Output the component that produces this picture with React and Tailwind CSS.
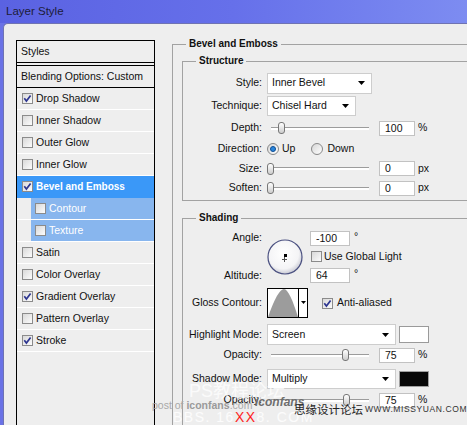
import React from "react";

const Check = ({ checked }) => (
  <span className="flex h-[11px] w-[11px] shrink-0 items-center justify-center border border-[#8b8b8b] bg-linear-to-br from-[#d9d9d9] to-[#fcfcfc]">
    {checked && (
      <svg width="9" height="9" viewBox="0 0 9 9">
        <path d="M1.3 4.3 L3.4 7 L7.6 1.4" fill="none" stroke="#2d3590" strokeWidth="1.7" />
      </svg>
    )}
  </span>
);

const Arrow = () => (
  <svg width="7" height="4" viewBox="0 0 7 4">
    <polygon points="0,0 7,0 3.5,4" fill="#000" />
  </svg>
);

const Select = ({ value, className }) => (
  <div className={"flex items-center justify-between border border-[#cdcdcd] bg-white pl-[4px] pr-[6px] " + className}>
    <span>{value}</span>
    <Arrow />
  </div>
);

const Input = ({ children, className }) => (
  <div className={"flex h-[15px] items-center border border-[#c2c2c2] bg-white pl-[5px] leading-none " + className}>
    {children}
  </div>
);

const Slider = ({ pos }) => (
  <div className="relative ml-[4px] flex h-[14px] w-[98px] items-center">
    <div className="h-[3px] w-full border-t border-[#9c9c9c] bg-white" />
    <div
      className="absolute top-[1px] h-[12px] w-[7px] rounded-[3px] border border-[#777] bg-linear-to-b from-white to-[#cdcdcd]"
      style={{ left: pos }}
    />
  </div>
);

const Radio = ({ on }) => (
  <span className="flex h-[12px] w-[12px] shrink-0 items-center justify-center rounded-full border border-[#888] bg-linear-to-br from-[#d6d6d6] to-white">
    {on && <span className="h-[6px] w-[6px] rounded-full border border-[#0d4d93] bg-[#2a86dc]" />}
  </span>
);

const Label = ({ children }) => (
  <span className="w-[79px] shrink-0 text-right">{children}</span>
);

const Group = ({ title, className, children }) => (
  <div className={"relative border-l border-t border-[#a2a2a2] " + className}>
    <span className="absolute left-[13px] top-[-7px] bg-[#eeeeee] px-[3px] text-[10px] font-bold leading-[12px]">
      {title}
    </span>
    {children}
  </div>
);

const rows = [
  { label: "Drop Shadow", checked: true },
  { label: "Inner Shadow" },
  { label: "Outer Glow" },
  { label: "Inner Glow" },
  { label: "Bevel and Emboss", checked: true, active: true },
  { label: "Contour", sub: true },
  { label: "Texture", sub: true },
  { label: "Satin" },
  { label: "Color Overlay" },
  { label: "Gradient Overlay", checked: true },
  { label: "Pattern Overlay" },
  { label: "Stroke", checked: true },
];

function StyleRow({ r }) {
  if (r.active) {
    return (
      <div className="flex h-[22px] items-center gap-[3px] border-b border-[#3a98f8] bg-[#3a98f8] pl-[5px] text-[10px] font-bold text-white">
        <Check checked={r.checked} />
        <span>{r.label}</span>
      </div>
    );
  }
  if (r.sub) {
    return (
      <div className="flex h-[22px] border-b border-white">
        <div className="ml-[14px] flex flex-1 items-center gap-[3px] bg-[#88b6ee] pl-[4px] text-white">
          <Check checked={r.checked} />
          <span>{r.label}</span>
        </div>
      </div>
    );
  }
  return (
    <div className="flex h-[22px] items-center gap-[3px] border-b border-white pl-[5px]">
      <Check checked={r.checked} />
      <span>{r.label}</span>
    </div>
  );
}

export default function App() {
  return (
    <div className="relative h-[425px] w-[467px] overflow-hidden bg-[#6a72e6] font-['Liberation_Sans',Arial,sans-serif] text-[10.5px] text-[#111]">
      {/* title bar */}
      <div className="flex h-[23px] items-center bg-linear-to-r from-[#5a62e2] via-[#6670ea] to-[#7d8cf1] pl-[6px] text-[11.5px] text-[#1c1c38]">
        Layer Style
      </div>

      {/* body */}
      <div className="ml-[3px] flex h-[402px] rounded-tl-[5px] border-l border-t border-[#6f73b2] bg-[#eeeeee]">
        {/* left styles panel */}
        <div className="flex flex-col pl-[12px] pt-[16px]">
          <div className="flex w-[139px] flex-1 flex-col border-x border-black">
            <div className="flex h-[23px] items-center border-y border-black pl-[4px]">Styles</div>
            <div className="h-[2px]" />
            <div className="flex h-[23px] items-center border-y border-black pl-[4px]">
              Blending Options: Custom
            </div>
            {rows.map((r) => (
              <StyleRow key={r.label} r={r} />
            ))}
          </div>
        </div>

        {/* right settings */}
        <div className="ml-[17px] w-[300px] shrink-0 pt-[20px]">
          <Group title="Bevel and Emboss" className="h-[400px]">
            {/* Structure */}
            <Group title="Structure" className="ml-[9px] mt-[16px] border-b pb-[2px] pt-[10px]">
              <div className="flex h-[22px] items-center">
                <Label>Style:</Label>
                <Select value="Inner Bevel" className="ml-[5px] h-[21px] w-[105px]" />
              </div>
              <div className="mt-[1px] flex h-[22px] items-center">
                <Label>Technique:</Label>
                <Select value="Chisel Hard" className="ml-[5px] h-[20px] w-[89px]" />
              </div>
              <div className="flex h-[22px] items-center">
                <Label>Depth:</Label>
                <div className="ml-[5px] flex items-center">
                  <Slider pos={7} />
                  <Input className="ml-[10px] w-[36px]">100</Input>
                  <span className="ml-[3px]">%</span>
                </div>
              </div>
              <div className="flex h-[20px] items-center">
                <Label>Direction:</Label>
                <div className="ml-[5px] flex items-center">
                  <Radio on />
                  <span className="ml-[3px]">Up</span>
                  <span className="ml-[16px]">
                    <Radio />
                  </span>
                  <span className="ml-[4px]">Down</span>
                </div>
              </div>
              <div className="flex h-[19px] items-center">
                <Label>Size:</Label>
                <div className="ml-[5px] flex items-center">
                  <Slider pos={-4} />
                  <Input className="ml-[10px] w-[36px]">0</Input>
                  <span className="ml-[3px]">px</span>
                </div>
              </div>
              <div className="flex h-[20px] items-center">
                <Label>Soften:</Label>
                <div className="ml-[5px] flex items-center">
                  <Slider pos={-4} />
                  <Input className="ml-[10px] w-[36px]">0</Input>
                  <span className="ml-[3px]">px</span>
                </div>
              </div>
            </Group>

            {/* Shading */}
            <Group title="Shading" className="ml-[9px] mt-[17px] h-[220px] pt-[11px]">
              <div className="flex h-[55px]">
                <div className="flex w-[79px] flex-col justify-between pb-[4px] pt-[1px] text-right leading-[12px]">
                  <span>Angle:</span>
                  <span>Altitude:</span>
                </div>
                <div className="ml-[5px] mt-[9px]">
                  <svg width="36" height="36" viewBox="0 0 36 36">
                    <defs>
                      <radialGradient id="dial" cx="45%" cy="40%" r="60%">
                        <stop offset="0%" stopColor="#ffffff" />
                        <stop offset="75%" stopColor="#f4f4f6" />
                        <stop offset="100%" stopColor="#c9cad4" />
                      </radialGradient>
                    </defs>
                    <circle cx="18" cy="18" r="17" fill="url(#dial)" stroke="#4a5080" strokeWidth="1.2" />
                    <rect x="17" y="15" width="3" height="3" fill="#000" />
                    <line x1="17.5" y1="18" x2="17.5" y2="23" stroke="#555" strokeWidth="1" />
                    <line x1="15" y1="20.5" x2="20" y2="20.5" stroke="#555" strokeWidth="1" />
                  </svg>
                </div>
                <div className="ml-[7px] flex flex-col">
                  <div className="mt-[1px] flex items-start">
                    <Input className="w-[40px]">-100</Input>
                    <span className="ml-[4px] leading-[10px]">°</span>
                  </div>
                  <div className="ml-[1px] mt-[5px] flex h-[11px] items-center gap-[2px]">
                    <Check />
                    <span>Use Global Light</span>
                  </div>
                  <div className="mt-[6px] flex items-start">
                    <Input className="w-[40px]">64</Input>
                    <span className="ml-[4px] leading-[10px]">°</span>
                  </div>
                </div>
              </div>

              <div className="mt-[3px] flex h-[30px] items-center">
                <Label>Gloss Contour:</Label>
                <div className="ml-[5px] flex h-[30px] w-[41px] border border-black bg-white">
                  <svg width="30" height="28" viewBox="0 0 30 28">
                    <path d="M0 28 C5 14 11 0 16 0 C20 0 25 12 30 28 Z" fill="#9c9c9c" />
                  </svg>
                  <div className="flex flex-1 items-center justify-center border-l border-black pb-[2px]">
                    <svg width="5" height="3" viewBox="0 0 5 3">
                      <polygon points="0,0 5,0 2.5,3" fill="#000" />
                    </svg>
                  </div>
                </div>
                <div className="ml-[14px] flex items-center gap-[4px]">
                  <Check checked />
                  <span>Anti-aliased</span>
                </div>
              </div>

              <div className="mt-[6px] flex h-[21px] items-center">
                <Label>Highlight Mode:</Label>
                <Select value="Screen" className="ml-[5px] h-[21px] w-[129px]" />
                <div className="ml-[3px] h-[17px] w-[30px] border border-[#9a9a9a] bg-white" />
              </div>
              <div className="mt-[1px] flex h-[18px] items-center">
                <Label>Opacity:</Label>
                <div className="ml-[5px] flex items-center">
                  <Slider pos={71} />
                  <Input className="ml-[10px] w-[36px]">75</Input>
                  <span className="ml-[3px]">%</span>
                </div>
              </div>
              <div className="mt-[5px] flex h-[20px] items-center">
                <Label>Shadow Mode:</Label>
                <Select value="Multiply" className="ml-[5px] h-[20px] w-[129px]" />
                <div className="ml-[3px] h-[16px] w-[30px] border border-[#a0a0a0] bg-[#080808]" />
              </div>
              <div className="mt-[2px] flex h-[18px] items-center">
                <Label>Opacity:</Label>
                <div className="ml-[5px] flex items-center">
                  <Slider pos={72} />
                  <Input className="ml-[10px] w-[36px]">75</Input>
                  <span className="ml-[3px]">%</span>
                </div>
              </div>
            </Group>
          </Group>
        </div>
      </div>

      {/* watermarks */}
      <div className="pointer-events-none absolute left-[189px] top-[381px] whitespace-nowrap font-['Liberation_Sans','Noto_Sans_CJK_SC',sans-serif] text-[18px] leading-[20px] text-white/75">
        PS教程论坛
      </div>
      <div className="pointer-events-none absolute left-[152px] top-[399px] whitespace-nowrap text-[10.5px] leading-[12px] text-[#a8a8a8]">
        post of <span className="font-bold text-[#9a9a9a]">iconfans</span>.com
      </div>
      <div className="pointer-events-none absolute left-[255px] top-[396px] whitespace-nowrap text-[12px] font-bold italic leading-[13px] text-[#6e6e6e]">
        iconfans
      </div>
      <div className="pointer-events-none absolute left-[173px] top-[408px] whitespace-nowrap text-[14px] leading-[18px] tracking-[1.5px] text-white/80">
        BBS. 16<span className="text-[#ff1c1c]">XX</span>8. COM
      </div>
      <div className="pointer-events-none absolute left-[294px] top-[403px] flex items-center gap-[2px] whitespace-nowrap">
        <span className="font-['Noto_Sans_CJK_SC',sans-serif] text-[11.5px] leading-[13px] text-[#222]">思缘设计论坛</span>
        <span className="text-[8.5px] leading-[13px] tracking-[0.6px] text-[#333]">WWW.MISSYUAN.COM</span>
      </div>
    </div>
  );
}
